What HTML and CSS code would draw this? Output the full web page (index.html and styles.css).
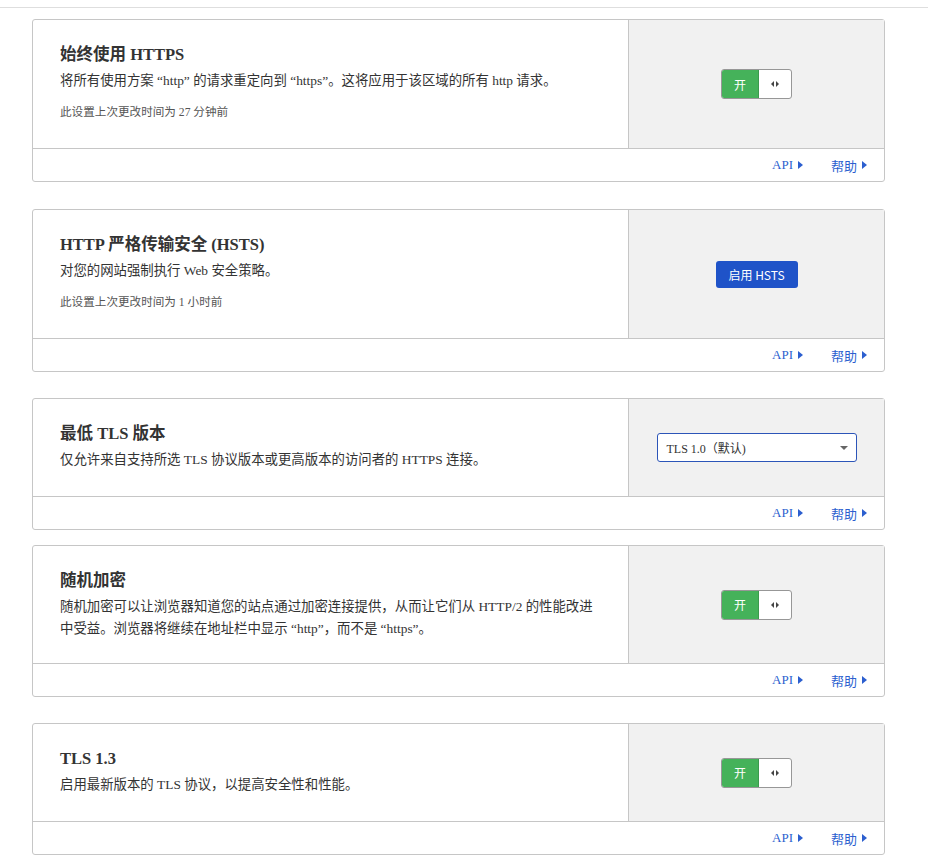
FILE: index.html
```html
<!DOCTYPE html>
<html lang="zh-CN">
<head>
<meta charset="utf-8">
<link rel="stylesheet" href="styles.css">
</head>
<body>
<div class="topbar"></div>
<main class="page">

  <section class="card gap-27">
    <div class="card-main">
      <div class="card-text">
        <h3 class="title">始终使用 HTTPS</h3>
        <p class="desc">将所有使用方案 “http” 的请求重定向到 “https”。这将应用于该区域的所有 http 请求。</p>
        <p class="meta">此设置上次更改时间为 27 分钟前</p>
      </div>
      <div class="card-ctrl">
        <div class="toggle"><span class="toggle-on">开</span><span class="toggle-knob"><i class="tri-l"></i><i class="tri-r"></i></span></div>
      </div>
    </div>
    <div class="card-foot"><a class="link">API<i class="tri-link"></i></a><a class="link">帮助<i class="tri-link"></i></a></div>
  </section>

  <section class="card gap-26">
    <div class="card-main">
      <div class="card-text">
        <h3 class="title">HTTP 严格传输安全 (HSTS)</h3>
        <p class="desc">对您的网站强制执行 Web 安全策略。</p>
        <p class="meta">此设置上次更改时间为 1 小时前</p>
      </div>
      <div class="card-ctrl">
        <button class="btn">启用 HSTS</button>
      </div>
    </div>
    <div class="card-foot"><a class="link">API<i class="tri-link"></i></a><a class="link">帮助<i class="tri-link"></i></a></div>
  </section>

  <section class="card gap-15">
    <div class="card-main">
      <div class="card-text">
        <h3 class="title">最低 TLS 版本</h3>
        <p class="desc">仅允许来自支持所选 TLS 协议版本或更高版本的访问者的 HTTPS 连接。</p>
      </div>
      <div class="card-ctrl">
        <div class="select"><span>TLS 1.0（默认)</span><i class="tri-down"></i></div>
      </div>
    </div>
    <div class="card-foot"><a class="link">API<i class="tri-link"></i></a><a class="link">帮助<i class="tri-link"></i></a></div>
  </section>

  <section class="card gap-26">
    <div class="card-main">
      <div class="card-text tight">
        <h3 class="title">随机加密</h3>
        <p class="desc narrow">随机加密可以让浏览器知道您的站点通过加密连接提供，从而让它们从 HTTP/2 的性能改进中受益。浏览器将继续在地址栏中显示 “http”，而不是 “https”。</p>
      </div>
      <div class="card-ctrl">
        <div class="toggle"><span class="toggle-on">开</span><span class="toggle-knob"><i class="tri-l"></i><i class="tri-r"></i></span></div>
      </div>
    </div>
    <div class="card-foot"><a class="link">API<i class="tri-link"></i></a><a class="link">帮助<i class="tri-link"></i></a></div>
  </section>

  <section class="card">
    <div class="card-main">
      <div class="card-text">
        <h3 class="title">TLS 1.3</h3>
        <p class="desc">启用最新版本的 TLS 协议，以提高安全性和性能。</p>
      </div>
      <div class="card-ctrl">
        <div class="toggle"><span class="toggle-on">开</span><span class="toggle-knob"><i class="tri-l"></i><i class="tri-r"></i></span></div>
      </div>
    </div>
    <div class="card-foot"><a class="link">API<i class="tri-link"></i></a><a class="link">帮助<i class="tri-link"></i></a></div>
  </section>

</main>
</body>
</html>
```

FILE: styles.css
```css
* { box-sizing: border-box; }
html, body { margin: 0; padding: 0; background: #fff; }
body {
  font-family: "Liberation Serif", "Noto Sans CJK SC", serif;
  color: #333;
}
.topbar {
  height: 8px;
  border-bottom: 1px solid #dedede;
}
.page {
  padding: 11px 0 20px 32px;
  width: 885px;
}
.card {
  border: 1px solid #c6c6c6;
  border-radius: 3px;
  background: #fff;
}
.gap-27 { margin-bottom: 27px; }
.gap-26 { margin-bottom: 26px; }
.gap-15 { margin-bottom: 15px; }
.card-main {
  display: flex;
}
.card-text {
  flex: 1;
  padding: 23px 27px 25px;
}
.card-text.tight { padding-bottom: 23px; }
.title {
  margin: 0;
  font-size: 16.5px;
  line-height: 24px;
  font-weight: bold;
  color: #333;
}
.desc {
  margin: 3px 0 0;
  font-size: 13.4px;
  line-height: 22px;
  color: #333;
}
.desc.narrow { max-width: 545px; }
.meta {
  margin: 11px 0 0;
  font-size: 11.6px;
  line-height: 20px;
  color: #555;
}
.card-ctrl {
  width: 256px;
  flex: none;
  border-left: 1px solid #c6c6c6;
  background: #f1f1f1;
  display: flex;
  align-items: center;
  justify-content: center;
}
.card-foot {
  border-top: 1px solid #c6c6c6;
  height: 33px;
  display: flex;
  align-items: center;
  justify-content: flex-end;
  gap: 28px;
  padding-right: 17px;
}
.link {
  font-size: 13px;
  color: #2c5fcf;
  display: flex;
  align-items: center;
  cursor: pointer;
}
.tri-link {
  display: inline-block;
  width: 0; height: 0;
  border-top: 4px solid transparent;
  border-bottom: 4px solid transparent;
  border-left: 5px solid #2c5fcf;
  margin-left: 5px;
}
.toggle {
  display: flex;
  width: 71px;
  height: 30px;
  border: 1px solid #979797;
  border-radius: 3px;
  overflow: hidden;
  background: #fff;
}
.toggle-on {
  width: 37px;
  background: #45b25a;
  color: #fff;
  font-family: "Noto Sans CJK SC", sans-serif;
  font-size: 12px;
  display: flex;
  align-items: center;
  justify-content: center;
  border-right: 1px solid #3c9a4e;
}
.toggle-knob {
  flex: 1;
  display: flex;
  align-items: center;
  justify-content: center;
  gap: 2px;
  padding-right: 1px;
}
.tri-l, .tri-r {
  display: block;
  width: 0; height: 0;
  border-top: 3px solid transparent;
  border-bottom: 3px solid transparent;
}
.tri-l { border-right: 3px solid #444; }
.tri-r { border-left: 3px solid #444; }
.btn {
  width: 82px;
  height: 27px;
  border: 0;
  border-radius: 3px;
  background: #1f53c8;
  color: #fff;
  font-family: "Noto Sans CJK SC", sans-serif;
  font-size: 12px;
  padding: 0;
}
.select {
  width: 200px;
  height: 29px;
  border: 1px solid #2c55b8;
  border-radius: 3px;
  background: #fff;
  display: flex;
  align-items: center;
  justify-content: space-between;
  padding: 0 8px 0 9px;
  font-size: 12px;
  color: #333;
}
.tri-down {
  display: block;
  width: 0; height: 0;
  border-left: 4px solid transparent;
  border-right: 4px solid transparent;
  border-top: 4px solid #666;
}
```
